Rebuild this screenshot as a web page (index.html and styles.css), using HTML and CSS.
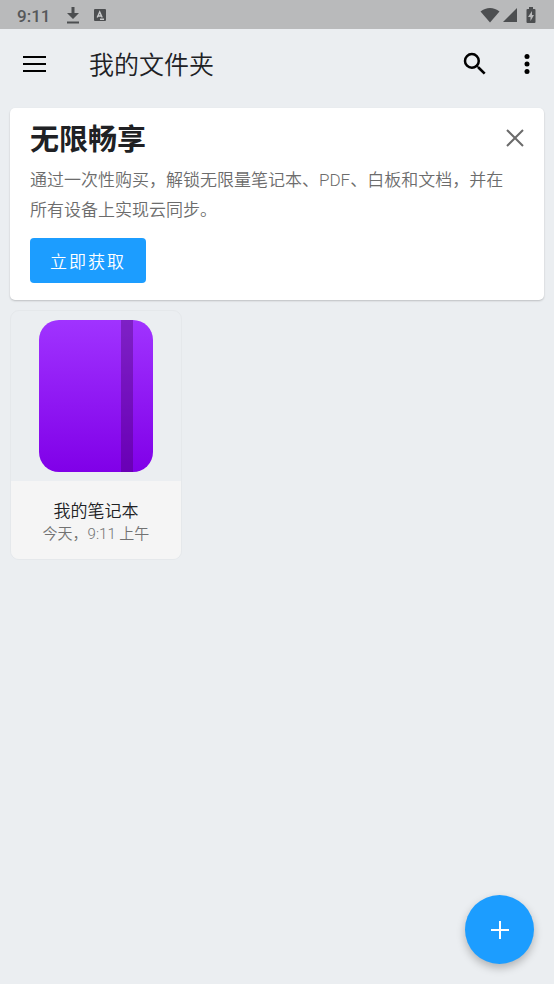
FILE: index.html
```html
<!DOCTYPE html>
<html lang="zh-CN">
<head>
<meta charset="utf-8">
<meta name="viewport" content="width=device-width, initial-scale=1">
<title>我的文件夹</title>
<link rel="stylesheet" href="styles.css">
</head>
<body>
<div class="status">
  <span class="status-time">9:11</span>
  <svg class="status-download" width="14" height="18" viewBox="0 0 14 18" aria-hidden="true"><path d="M5.500 1h3v6H13l-6 6-6-6h4.500zM1 15.500h12v2H1z"/></svg>
  <svg class="status-app" width="12" height="14" viewBox="0 0 12 14" aria-hidden="true"><rect y="1" width="12" height="12" rx="1"/><path class="status-mark" d="M3.200 9.500L5.700 4l2.500 5.500M4 8h3.400M6 11.200h4"/></svg>
  <span class="status-space"></span>
  <svg width="20" height="16" viewBox="0 0 20 16" aria-hidden="true"><path d="M.5 4.500C6-.2 14-.2 19.500 4.500L10 15.500z"/></svg>
  <svg class="status-signal" width="14" height="14" viewBox="0 0 14 14" aria-hidden="true"><path d="M14 0v14H0z"/></svg>
  <svg class="status-battery" width="10" height="16" viewBox="0 0 10 16" aria-hidden="true"><path fill-rule="evenodd" d="M3 0h4v2h1.500Q9.500 2 9.500 3v12q0 1-1 1h-7q-1 0-1-1V3q0-1 1-1H3zM6 4L2 10h2.500v4L8 8H6z"/></svg>
</div>
<header class="bar">
  <button class="icon-button" aria-label="菜单"><svg width="24" height="16" viewBox="0 0 24 16"><path d="M1 0h23v2H1zM1 7h23v2H1zM1 14h23v2H1z"/></svg></button>
  <h1 class="bar-title">我的文件夹</h1>
  <button class="icon-button" aria-label="搜索"><svg width="30" height="30" viewBox="0 0 24 24"><path d="M15.500 14h-.79l-.28-.27A6.470 6.470 0 0 0 16 9.500 6.500 6.500 0 1 0 9.500 16c1.610 0 3.090-.59 4.230-1.570l.27.28v.79l5 4.990L20.490 19zm-6 0a4.500 4.500 0 1 1 0-9 4.500 4.500 0 0 1 0 9z"/></svg></button>
  <button class="icon-button" aria-label="更多"><svg width="6" height="20" viewBox="0 0 6 20"><circle cx="3" cy="2.500" r="2.500"/><circle cx="3" cy="10" r="2.500"/><circle cx="3" cy="17.500" r="2.500"/></svg></button>
</header>
<main class="content">
  <section class="promo">
    <div class="promo-head">
      <h2 class="promo-title">无限畅享</h2>
      <button class="close" aria-label="关闭"><svg width="18" height="18" viewBox="0 0 18 18"><path d="M1 1l16 16M17 1L1 17"/></svg></button>
    </div>
    <p class="promo-text">通过一次性购买，解锁无限量笔记本、PDF、白板和文档，并在所有设备上实现云同步。</p>
    <button class="buy">立即获取</button>
  </section>
  <div class="grid">
    <a class="book" href="#notebook">
      <div class="book-preview"><div class="cover"><div class="strap"></div></div></div>
      <div class="book-info">
        <div class="book-name">我的笔记本</div>
        <div class="book-date">今天，9:11 上午</div>
      </div>
    </a>
  </div>
</main>
<button class="fab" aria-label="新建"><svg width="18" height="18" viewBox="0 0 18 18"><path d="M8 0h2v8h8v2h-8v8H8v-8H0V8h8z"/></svg></button>
</body>
</html>
```
FILE: styles.css
```css
* {
  box-sizing: border-box;
}

body {
  margin: 0;
  min-height: 100vh;
  background: #ebeef1;
  color: #202124;
  font-family: Roboto, "Noto Sans CJK SC", sans-serif;
  font-weight: 350;
}

button {
  padding: 0;
  border: 0;
  background: none;
  font: inherit;
}

svg {
  display: block;
  flex: none;
}

h1,
h2,
p {
  margin: 0;
}

.status {
  display: flex;
  align-items: center;
  height: 29px;
  padding: 0 18px 0 17px;
  background: #b9babb;
  color: #56585a;
  fill: #4c4e50;
}

.status-time {
  font-size: 17px;
  font-weight: 500;
  line-height: 20px;
  padding-top: 2px;
}

.status-download {
  margin-left: 16px;
}

.status-app {
  margin-left: 14px;
}

.status-mark {
  fill: none;
  stroke: #c8c9ca;
  stroke-width: 1.4;
}

.status-space {
  flex: 1;
}

.status-signal {
  margin-left: 3px;
}

.status-battery {
  margin-left: 9px;
}

.bar {
  display: flex;
  align-items: center;
  height: 69px;
  padding: 0 3px 0 10px;
}

.icon-button {
  display: grid;
  place-items: center;
  width: 48px;
  height: 48px;
  margin-right: 4px;
}

.icon-button:last-child {
  margin-right: 0;
}

.bar-title {
  flex: 1;
  padding: 4px 0 0 27px;
  font-size: 25px;
  font-weight: 350;
  line-height: 36px;
}

.content {
  padding: 10px;
}

.promo {
  padding: 10px 20px 17px;
  border-radius: 5px;
  background: #fff;
  box-shadow: 0 1px 2px rgba(0, 0, 0, 0.2);
}

.promo-head {
  display: flex;
  align-items: center;
  justify-content: space-between;
  height: 40px;
}

.promo-title {
  padding-top: 4px;
  font-size: 29px;
  font-weight: 700;
  line-height: 40px;
}

.close {
  display: grid;
  place-items: center;
  width: 18px;
  height: 18px;
}

.close path {
  stroke: #6b6b6b;
  stroke-width: 2;
}

.promo-text {
  margin: 7px 0 13px;
  padding-right: 12px;
  color: #6c6c6c;
  font-size: 17px;
  line-height: 30px;
}

.buy {
  height: 45px;
  padding: 0 20px;
  border-radius: 4px;
  background: #1c9dff;
  color: #fff;
  font-size: 17px;
  letter-spacing: 2px;
}

.grid {
  display: grid;
  grid-template-columns: repeat(3, 1fr);
  gap: 9px;
  margin-top: 10px;
}

.book {
  overflow: hidden;
  border: 1px solid #e5e8eb;
  border-radius: 9px;
  color: inherit;
  text-align: center;
  text-decoration: none;
}

.book-preview {
  display: flex;
  justify-content: center;
  padding: 9px;
}

.cover {
  display: flex;
  justify-content: flex-end;
  width: 114px;
  height: 152px;
  padding-right: 20px;
  border-radius: 20px;
  background: linear-gradient(#a033ff, #8000e8);
}

.strap {
  width: 12px;
  background: rgba(62, 0, 90, 0.35);
}

.book-info {
  padding: 18px 8px 14px;
  background: #f5f5f5;
}

.book-name {
  font-size: 17px;
  line-height: 25px;
}

.book-date {
  color: #727272;
  font-size: 15px;
  line-height: 21px;
}

.fab {
  position: fixed;
  right: 20px;
  bottom: 20px;
  display: grid;
  place-items: center;
  width: 69px;
  height: 69px;
  border-radius: 50%;
  background: #1c9dff;
  box-shadow: 0 4px 8px rgba(0, 0, 0, 0.25);
  fill: #fff;
}
```
